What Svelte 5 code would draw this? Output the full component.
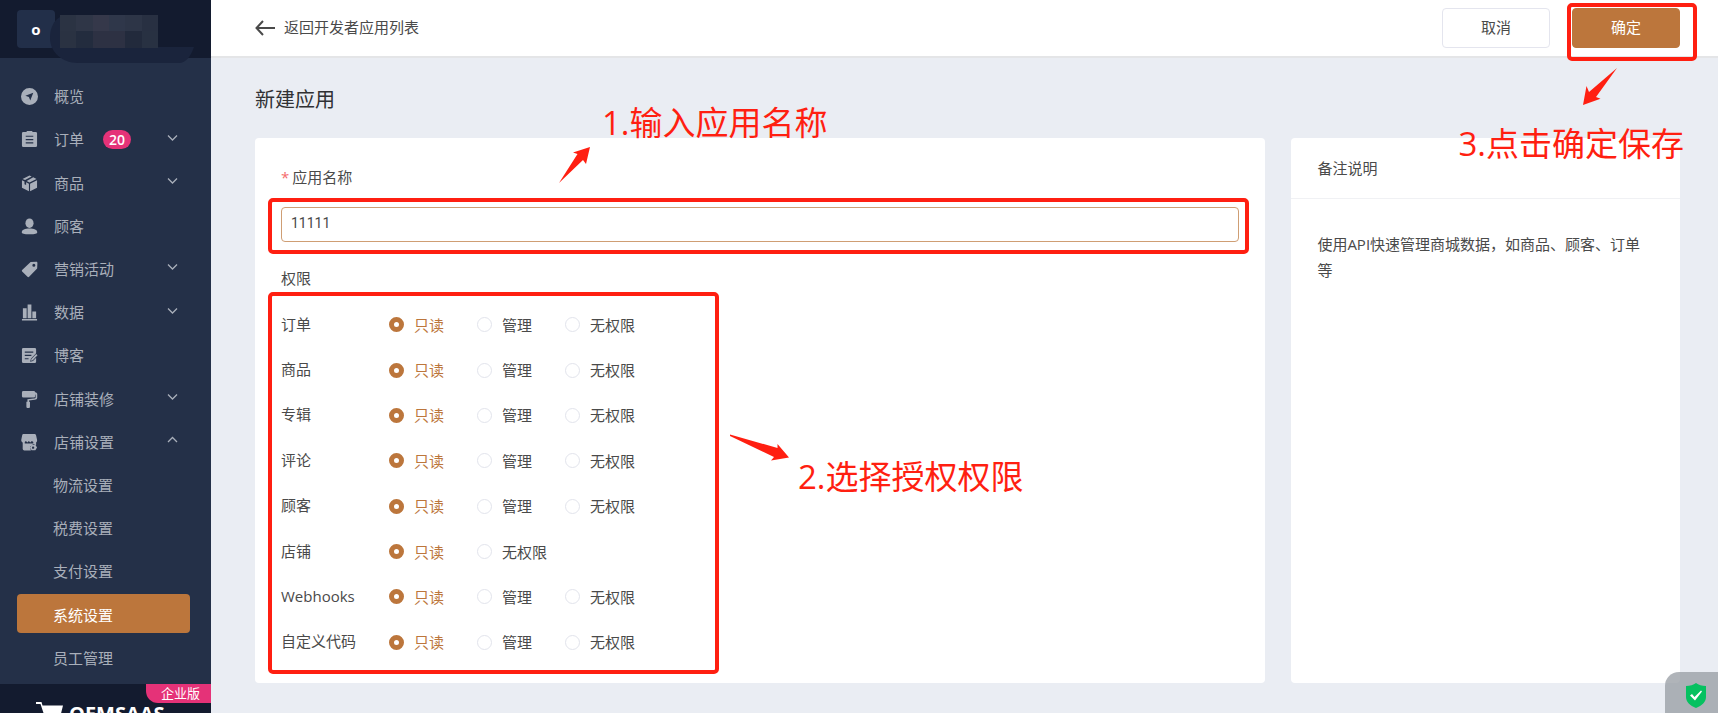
<script lang="ts">
  interface MenuItem {
    label: string;
    icon?: string;
    badge?: number;
    arrow?: 'up' | 'down';
    active?: boolean;
  }

  const menu: MenuItem[] = [
    { label: '概览', icon: 'compass' },
    { label: '订单', icon: 'order', badge: 20, arrow: 'down' },
    { label: '商品', icon: 'box', arrow: 'down' },
    { label: '顾客', icon: 'user' },
    { label: '营销活动', icon: 'tag', arrow: 'down' },
    { label: '数据', icon: 'chart', arrow: 'down' },
    { label: '博客', icon: 'blog' },
    { label: '店铺装修', icon: 'roller', arrow: 'down' },
    { label: '店铺设置', icon: 'shop', arrow: 'up' },
    { label: '物流设置' },
    { label: '税费设置' },
    { label: '支付设置' },
    { label: '系统设置', active: true },
    { label: '员工管理' }
  ];

  const full = ['只读', '管理', '无权限'];

  const scopes = [
    { key: 'order', label: '订单', options: full },
    { key: 'product', label: '商品', options: full },
    { key: 'collection', label: '专辑', options: full },
    { key: 'comment', label: '评论', options: full },
    { key: 'customer', label: '顾客', options: full },
    { key: 'shop', label: '店铺', options: ['只读', '无权限'] },
    { key: 'webhooks', label: 'Webhooks', options: full },
    { key: 'code', label: '自定义代码', options: full }
  ];

  const mosaic = [
    ['#2b3343', '#2f3647', '#35384a', '#2f374a', '#2d3547', '#283042'],
    ['#2a3242', '#232c3e', '#2d3143', '#2d3143', '#222a3c', '#283142']
  ];

  let appName = $state('11111');
  let granted = $state<Record<string, string>>(
    Object.fromEntries(scopes.map((s) => [s.key, '只读']))
  );
</script>

<div class="layout">
  <aside class="sidebar">
    <div class="store">
      <span class="avatar">o</span>
      <svg class="store-name" width="146" height="50" viewBox="0 0 146 50" aria-hidden="true">
        <path d="M12 1C3 5 0 14 0 23c0 14 12 25 28 25h101c7 0 12-7 15-16H108V1z" fill="#1a243c" />
        {#each mosaic as row, r}
          {#each row as fill, c}
            <rect x={10 + c * 16.3} y={r * 16.3} width="16.4" height="16.4" {fill} shape-rendering="crispEdges" />
          {/each}
        {/each}
      </svg>
    </div>

    <nav class="menu">
      {#each menu as item (item.label)}
        <a class="item" class:sub={!item.icon} class:active={item.active} href="#{item.label}">
          {#if item.icon}
            <svg class="icon" viewBox="0 0 18 18" fill="currentColor" aria-hidden="true">
              {#if item.icon === 'compass'}
                <path fill-rule="evenodd" d="M9 0a9 9 0 1 0 0 18A9 9 0 0 0 9 0zM13 5l-3.2 8.3-1.400-3.700L4.600 8.200z" />
              {:else if item.icon === 'order'}
                <path fill-rule="evenodd" d="M6 0h6v1h3.500A1.500 1.500 0 0 1 17 2.500v13a1.500 1.500 0 0 1-1.500 1.500h-13A1.500 1.500 0 0 1 1 15.500v-13A1.500 1.500 0 0 1 2.500 1H6zM5 5v1.200h8V5zm0 3.500v1.200h8V8.500zM5 12v1.200h8V12z" />
              {:else if item.icon === 'box'}
                <path d="M9 .6l2.300 1.100-7 3.700L1.600 4.200zM13 2.500l3.400 1.700L9 8 6 6.400zM1 5.600l2.700 1.300v3l1.700.8V7.800L8.400 9.200v8L1 13.600zM17 5.600v8l-7.400 3.700v-8z" />
              {:else if item.icon === 'user'}
                <ellipse cx="9" cy="5.500" rx="4.300" ry="5" />
                <path d="M.8 15c0-2.700 3.400-4 8.200-4s8.200 1.300 8.200 4c0 1.500-2.200 2.300-8.200 2.300S.8 16.500.8 15z" />
              {:else if item.icon === 'tag'}
                <path fill-rule="evenodd" d="M10.200 1l6-.2c.7 0 1.200.5 1.200 1.200l-.3 6-8.500 8.800c-.5.500-1.200.5-1.700 0L1.200 11.200c-.5-.5-.5-1.200 0-1.700zM13.600 3a1.600 1.600 0 1 0 0 3.200 1.600 1.600 0 0 0 0-3.200z" />
              {:else if item.icon === 'chart'}
                <path d="M2 4.500h4V15H2zM7 .5h4V15H7zM12 8h4v7h-4zM1 16h16v1.500H1z" />
              {:else if item.icon === 'blog'}
                <path fill-rule="evenodd" d="M2.500 1h12A1.500 1.500 0 0 1 16 2.500v4l-5.500 6-.8 3 3-.7L16 11.500v4a1.500 1.500 0 0 1-1.500 1.500h-12A1.500 1.500 0 0 1 1 15.500v-13A1.500 1.500 0 0 1 2.500 1zM4 4.800V6h9V4.800zm0 3.500v1.200h7V8.300zm0 3.500V13h4v-1.200z" />
                <path d="M16 7.300l1.500 1.500-5 5.200-2 .6.500-2z" />
              {:else if item.icon === 'roller'}
                <path d="M2.500 0h11A1.500 1.500 0 0 1 15 1.200c1.500.3 2.200 1 2.200 2.300v3.300c0 1.500-1 2.300-2.700 2.500l-6 .7v1.500h1v5a1.700 1.700 0 0 1-3.800 0v-5h1.100V8.800l6-.8c1.700-.3 2.700-.3 2.700-1.500V4l-.5-.3v1.800A1.500 1.500 0 0 1 13.500 7h-11A1.500 1.500 0 0 1 1 5.500v-4A1.500 1.500 0 0 1 2.500 0z" />
              {:else}
                <path fill-rule="evenodd" d="M3 0h11c1 0 1.700.5 2 1.500l1 4.500c.2 1.300-.2 2.400-1 3v3l-3-1.500-3.500 3 1 4H3.500A1.700 1.700 0 0 1 1.800 16V9C.6 8.300.1 7.200.3 6l.9-4.500C1.400.5 2 0 3 0zM4 8.500V10h9V8.500l-1.500-1L9.800 9 8.300 7.500 6.800 9 5.200 7.500z" />
                <path fill-rule="evenodd" d="M11.200 11.500h4l1.800 2.900-1.800 2.900h-4l-1.700-2.900zm2 1.800a1.200 1.200 0 1 0 0 2.300 1.200 1.200 0 0 0 0-2.300z" />
              {/if}
            </svg>
          {/if}
          <span class="label">{item.label}</span>
          {#if item.badge}
            <span class="count">{item.badge}</span>
          {/if}
          {#if item.arrow}
            <svg class="chevron" viewBox="0 0 11 8" fill="none" stroke="currentColor" stroke-width="1.3" aria-hidden="true">
              <path d={item.arrow === 'down' ? 'M1 1.500L5.500 6 10 1.500' : 'M1 6l4.500-4.500L10 6'} />
            </svg>
          {/if}
        </a>
      {/each}
    </nav>

    <div class="brand">
      <span class="plan">企业版</span>
      <svg class="cart" viewBox="0 0 28 26" aria-hidden="true">
        <path d="M0 1h5.500l1 3.500h20.500l-3 12H9L4.500 3H0z" fill="#fff" />
        <circle cx="11" cy="22" r="3" fill="#fff" />
        <circle cx="21" cy="22" r="3" fill="#fff" />
      </svg>
      <span class="brand-name">OEMSAAS</span>
    </div>
  </aside>

  <div class="page">
    <header class="topbar">
      <a class="back" href="#apps">
        <svg width="20" height="16" viewBox="0 0 20 16" fill="none" stroke="currentColor" stroke-width="2" aria-hidden="true">
          <path d="M8 1L1.500 8 8 15M1.500 8H20" />
        </svg>
        <span>返回开发者应用列表</span>
      </a>
      <div class="actions">
        <button class="btn" type="button">取消</button>
        <div class="confirm">
          <button class="btn primary" type="submit" form="app-form">确定</button>
          <span class="mark mark-confirm"></span>
          <svg class="arrow arrow-3" width="36" height="40" viewBox="0 0 36 40" aria-hidden="true">
            <path d="M35 1L14 30l4.500 1.700L1 38 4.500 19l2.500 6z" />
          </svg>
          <span class="note note-3">3.点击确定保存</span>
        </div>
      </div>
    </header>

    <main class="content">
      <h1>新建应用</h1>
      <div class="columns">
        <form class="card form" id="app-form" onsubmit={(e) => e.preventDefault()}>
          <div class="field">
            <label for="app-name"><span class="star">*</span>应用名称</label>
            <div class="input-wrap">
              <input id="app-name" type="text" bind:value={appName} required />
              <span class="mark mark-input"></span>
            </div>
            <svg class="arrow arrow-1" width="34" height="40" viewBox="0 0 34 40" aria-hidden="true">
              <path d="M1 38L19.500 9 15 7.500 32 2l-4 17-3-4z" />
            </svg>
            <span class="note note-1">1.输入应用名称</span>
          </div>

          <h2>权限</h2>
          <div class="scopes">
            {#each scopes as scope (scope.key)}
              <div class="scope" role="radiogroup" aria-label={scope.label}>
                <span class="scope-name">{scope.label}</span>
                {#each scope.options as option}
                  <label class="option">
                    <input type="radio" name={scope.key} value={option} bind:group={granted[scope.key]} />
                    <span>{option}</span>
                  </label>
                {/each}
              </div>
            {/each}
            <span class="mark mark-scopes"></span>
            <svg class="arrow arrow-2" width="62" height="30" viewBox="0 0 62 30" aria-hidden="true">
              <path d="M1 .5L48.500 14v-4L60 23.500 42 26.500l3-3.500L1 2z" />
            </svg>
            <span class="note note-2">2.选择授权权限</span>
          </div>
        </form>

        <section class="card remark">
          <h2>备注说明</h2>
          <p>使用API快速管理商城数据，如商品、顾客、订单等</p>
        </section>
      </div>
    </main>
  </div>

  <button class="shield" type="button" aria-label="安全">
    <svg width="20" height="25" viewBox="0 0 20 25" aria-hidden="true">
      <path d="M10 0c2.500 2 6 3 10 3v11c0 5-4 8.500-10 11C4 22.500 0 19 0 14V3c4 0 7.500-1 10-3z" fill="#06c160" />
      <path d="M4 12.500l2-1.500 2.500 3L15 7.500l1 1L9 17.500z" fill="#fff" />
    </svg>
  </button>
</div>

<style>
  :global(body) {
    margin: 0;
    background: #eaedf3;
  }

  .layout {
    display: flex;
    min-height: 100vh;
    font-family: 'Open Sans', 'Noto Sans CJK SC', sans-serif;
    font-size: 15px;
    line-height: 24px;
    color: #4a4a4a;
  }
  .layout * {
    box-sizing: border-box;
  }
  h1,
  h2,
  p {
    margin: 0;
    font-weight: 400;
  }
  a {
    color: inherit;
    text-decoration: none;
  }

  /* sidebar */
  .sidebar {
    position: sticky;
    top: 0;
    flex: 0 0 211px;
    height: 100vh;
    display: flex;
    flex-direction: column;
    background: #243048;
    color: #a9afba;
  }
  .store {
    position: relative;
    flex: 0 0 58px;
    padding: 10px 17px;
    background: #131b2f;
  }
  .avatar {
    display: block;
    width: 38px;
    height: 38px;
    border-radius: 4px;
    background: #222f49;
    color: #fff;
    font-weight: 700;
    line-height: 38px;
    text-align: center;
  }
  .store-name {
    position: absolute;
    left: 50px;
    top: 15px;
  }
  .menu {
    flex: 1;
    display: grid;
    grid-auto-rows: 1fr;
    gap: 4px;
    padding: 17px 21px 8px 17px;
  }
  .item {
    display: flex;
    align-items: center;
    padding: 0 12px 0 4px;
    border-radius: 4px;
  }
  .icon {
    width: 17px;
    height: 17px;
    margin: 4px 16px 0 0;
  }
  .label {
    padding-top: 3px;
  }
  .sub {
    padding-left: 36px;
  }
  .active {
    background: #bc763c;
    color: #fff;
  }
  .count {
    margin: 4px 0 0 19px;
    width: 28px;
    border-radius: 10px;
    background: #e53278;
    color: #fff;
    font-size: 14px;
    font-weight: 600;
    line-height: 19px;
    text-align: center;
  }
  .chevron {
    width: 11px;
    height: 8px;
    margin-left: auto;
  }
  .brand {
    position: relative;
    flex: 0 0 29px;
    display: flex;
    align-items: flex-start;
    gap: 5px;
    padding: 17px 0 0 36px;
    overflow: hidden;
    background: #131b2f;
  }
  .cart {
    flex: none;
    width: 28px;
    height: 26px;
  }
  .brand-name {
    color: #fff;
    font-size: 20px;
    font-weight: 700;
    line-height: 26px;
  }
  .plan {
    position: absolute;
    top: 0;
    right: 0;
    padding: 0 11px 0 15px;
    border-bottom-left-radius: 12px;
    background: #e53278;
    color: #fff;
    font-size: 13px;
    line-height: 19px;
  }

  /* top bar */
  .page {
    flex: 1;
    min-width: 0;
  }
  .topbar {
    display: flex;
    justify-content: space-between;
    align-items: center;
    height: 58px;
    padding: 0 38px 0 44px;
    border-bottom: 2px solid #e4e5e7;
    background: #fff;
  }
  .back {
    display: flex;
    align-items: center;
    gap: 9px;
  }
  .back span {
    padding-bottom: 3px;
  }
  .actions {
    display: flex;
    gap: 22px;
  }
  .btn {
    width: 108px;
    height: 40px;
    padding: 0 0 3px;
    border: 1px solid #e4e5ee;
    border-radius: 4px;
    background: #fff;
    color: #4a4a4a;
    font: inherit;
    cursor: pointer;
  }
  .primary {
    border-color: #bc763c;
    background: #bc763c;
    color: #fff;
  }
  .confirm {
    position: relative;
  }

  /* content */
  .content {
    padding: 28px 38px 29px 44px;
  }
  h1 {
    margin-bottom: 24px;
    color: #303133;
    font-size: 20px;
    line-height: 28px;
  }
  h2 {
    font-size: 15px;
  }
  .columns {
    display: grid;
    grid-template-columns: 13fr 5fr;
    gap: 26px;
  }
  .card {
    border-radius: 4px;
    background: #fff;
  }
  .form {
    padding: 27px 26px 18px;
  }
  .field {
    position: relative;
    margin-bottom: 24px;
  }
  .field label {
    display: block;
    margin-bottom: 18px;
  }
  .star {
    margin-right: 3px;
    color: #f56c6c;
  }
  .input-wrap {
    position: relative;
  }
  .input-wrap input {
    display: block;
    width: 100%;
    height: 35px;
    padding: 0 9px 4px;
    border: 1px solid #cf9e74;
    border-radius: 4px;
    outline: none;
    background: #fff;
    color: #4a4a4a;
    font-family: Roboto, 'Noto Sans CJK SC', sans-serif;
    font-size: 14px;
  }
  .scopes {
    position: relative;
    display: grid;
    grid-auto-rows: 1fr;
    min-height: 363px;
    margin-top: 12px;
  }
  .scope {
    display: flex;
    align-items: center;
    gap: 33px;
  }
  .scope-name {
    flex: 0 0 75px;
    padding-bottom: 2px;
    white-space: nowrap;
  }
  .option {
    display: flex;
    align-items: center;
    gap: 10px;
    cursor: pointer;
  }
  .option input {
    appearance: none;
    width: 15px;
    height: 15px;
    margin: 0;
    border: 1px solid #e2e4ec;
    border-radius: 50%;
    background: #fff;
  }
  .option input:checked {
    border: 5px solid #bc763c;
  }
  .option input:checked + span {
    color: #bc763c;
  }
  .remark h2 {
    padding: 18px 26px;
    border-bottom: 1px solid #f0f1f4;
  }
  .remark p {
    padding: 32px 26px;
    line-height: 26px;
  }

  /* guide marks drawn over the page */
  .mark,
  .arrow,
  .note {
    position: absolute;
    z-index: 1;
    pointer-events: none;
  }
  .mark {
    border: 4px solid #ff1f11;
    border-radius: 5px;
  }
  .arrow {
    fill: #ff1f11;
  }
  .note {
    color: #ff1f11;
    font-size: 33px;
    line-height: 40px;
    white-space: nowrap;
  }
  .mark-confirm {
    inset: -5px -17px -13px -5px;
  }
  .mark-input {
    inset: -9px -10px -12px -13px;
  }
  .mark-scopes {
    inset: -10px auto -9px -13px;
    width: 451px;
  }
  .arrow-1 {
    left: 277px;
    top: -20px;
  }
  .note-1 {
    left: 321px;
    top: -62px;
  }
  .arrow-2 {
    left: 448px;
    top: 132px;
  }
  .note-2 {
    left: 517px;
    top: 155px;
  }
  .arrow-3 {
    right: 62px;
    top: 59px;
  }
  .note-3 {
    right: -4px;
    top: 116px;
  }

  .shield {
    position: fixed;
    right: 0;
    bottom: 0;
    display: flex;
    justify-content: center;
    align-items: flex-start;
    width: 53px;
    height: 41px;
    padding: 11px 0 0 8px;
    border: 0;
    border-top-left-radius: 14px;
    background: rgba(150, 155, 162, 0.75);
  }
</style>
